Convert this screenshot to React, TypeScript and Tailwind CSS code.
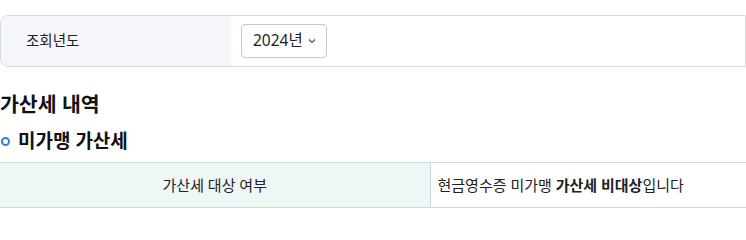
import { FC, ReactElement } from 'react';

const font = { fontFamily: '"Noto Sans", "Noto Sans CJK KR", sans-serif' };

const YearFilter: FC = (): ReactElement => (
  <div className="mt-[15px] flex h-[52px] w-[746px] overflow-hidden rounded-l-[8px] border border-[#d3dbe2]">
    <div className="flex w-[230px] items-center bg-[#f4f6fa] pl-[25px] text-[14.5px] text-[#222]">조회년도</div>
    <div className="flex flex-1 items-center bg-white pl-[10px]">
      <button className="flex h-[34px] items-center gap-[5px] rounded-[4px] border border-[#c8c8c8] bg-white pl-[11px] pr-[10px] text-[15.5px] text-[#222]">
        2024년
        <svg width="8" height="6" viewBox="0 0 8 6" fill="none" stroke="#555" strokeWidth="1.2">
          <path d="M1 1.5 L4 4.5 L7 1.5" />
        </svg>
      </button>
    </div>
  </div>
);

const App: FC = (): ReactElement => {
  return (
    <div className="h-[212px] w-[746px] overflow-hidden bg-white" style={font}>
      <YearFilter />
      <h2 className="mt-[22px] text-[20.5px] font-bold leading-[30px] text-[#111]">가산세 내역</h2>
      <h3 className="mt-[9px] flex items-center gap-[8px] text-[19px] font-bold leading-[26px] text-[#111]">
        <span className="ml-[1px] inline-block h-[9px] w-[9px] rounded-full border-2 border-[#3f7bd6]" />
        미가맹 가산세
      </h3>
      <table className="mt-[8px] w-[746px] border-collapse text-[15px] text-[#222]">
        <tbody>
          <tr className="h-[45px] border-y border-[#c8dadd]">
            <th className="w-[430px] border-r border-[#c8dadd] bg-[#eef6f6] text-center font-normal">가산세 대상 여부</th>
            <td className="pl-[7px] text-left">
              현금영수증 미가맹 <b className="font-bold">가산세 비대상</b>입니다
            </td>
          </tr>
        </tbody>
      </table>
    </div>
  );
};

export default App;
